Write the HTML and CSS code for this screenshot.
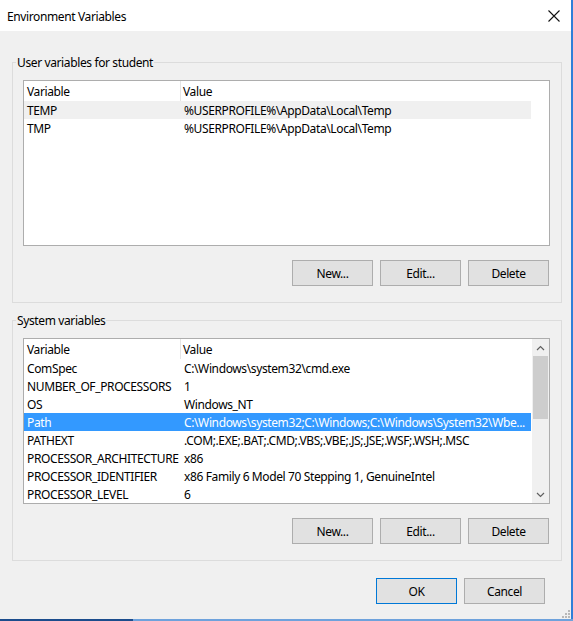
FILE: index.html
```html
<!DOCTYPE html>
<html>
<head>
<meta charset="utf-8">
<link rel="stylesheet" href="styles.css">
</head>
<body>
<div class="window">
  <div class="titlebar">
    <span class="title">Environment Variables</span>
    <svg class="close" width="12" height="12" viewBox="0 0 12 12"><path d="M0.5 0.5 L11.5 11.5 M11.5 0.5 L0.5 11.5" stroke="#111" stroke-width="1.1" fill="none"/></svg>
  </div>
  <div class="content">
    <fieldset class="group">
      <legend>User variables for student</legend>
      <div class="list">
        <div class="rows">
          <div class="row head"><span class="c1">Variable</span><span class="c2">Value</span></div>
          <div class="row soft"><span class="c1">TEMP</span><span class="c2">%USERPROFILE%\AppData\Local\Temp</span></div>
          <div class="row"><span class="c1">TMP</span><span class="c2">%USERPROFILE%\AppData\Local\Temp</span></div>
        </div>
      </div>
      <div class="btns">
        <button class="btn">New...</button>
        <button class="btn">Edit...</button>
        <button class="btn">Delete</button>
      </div>
    </fieldset>

    <fieldset class="group second">
      <legend>System variables</legend>
      <div class="list">
        <div class="rows">
          <div class="row head"><span class="c1">Variable</span><span class="c2">Value</span></div>
          <div class="row"><span class="c1">ComSpec</span><span class="c2">C:\Windows\system32\cmd.exe</span></div>
          <div class="row"><span class="c1">NUMBER_OF_PROCESSORS</span><span class="c2">1</span></div>
          <div class="row"><span class="c1">OS</span><span class="c2">Windows_NT</span></div>
          <div class="row selected"><span class="c1">Path</span><span class="c2">C:\Windows\system32;C:\Windows;C:\Windows\System32\Wbe...</span></div>
          <div class="row"><span class="c1">PATHEXT</span><span class="c2">.COM;.EXE;.BAT;.CMD;.VBS;.VBE;.JS;.JSE;.WSF;.WSH;.MSC</span></div>
          <div class="row"><span class="c1">PROCESSOR_ARCHITECTURE</span><span class="c2">x86</span></div>
          <div class="row"><span class="c1">PROCESSOR_IDENTIFIER</span><span class="c2">x86 Family 6 Model 70 Stepping 1, GenuineIntel</span></div>
          <div class="row"><span class="c1">PROCESSOR_LEVEL</span><span class="c2">6</span></div>
        </div>
        <div class="vscroll">
          <div class="arrow"><svg width="9" height="6" viewBox="0 0 9 6"><path d="M1 5 L4.5 1.5 L8 5" stroke="#606060" stroke-width="1.2" fill="none"/></svg></div>
          <div class="track"><div class="thumb"></div></div>
          <div class="arrow"><svg width="9" height="6" viewBox="0 0 9 6"><path d="M1 1 L4.5 4.5 L8 1" stroke="#606060" stroke-width="1.2" fill="none"/></svg></div>
        </div>
      </div>
      <div class="btns">
        <button class="btn">New...</button>
        <button class="btn">Edit...</button>
        <button class="btn">Delete</button>
      </div>
    </fieldset>

    <div class="dialog-btns">
      <button class="btn default">OK</button>
      <button class="btn">Cancel</button>
    </div>
    <svg class="grip" width="9" height="9" viewBox="0 0 9 9">
      <rect x="7" y="1" width="2" height="2" fill="#b8b8b8"/>
      <rect x="4" y="4" width="2" height="2" fill="#b8b8b8"/>
      <rect x="7" y="4" width="2" height="2" fill="#b8b8b8"/>
      <rect x="1" y="7" width="2" height="2" fill="#b8b8b8"/>
      <rect x="4" y="7" width="2" height="2" fill="#b8b8b8"/>
      <rect x="7" y="7" width="2" height="2" fill="#b8b8b8"/>
    </svg>
  </div>
  <div class="taskbar"></div>
</div>
</body>
</html>
```

FILE: styles.css
```css
* { box-sizing: border-box; }
html, body {
  margin: 0;
  padding: 0;
  width: 573px;
  height: 621px;
  overflow: hidden;
  background: #f0f0f0;
}
body {
  font-family: "Noto Sans", "Open Sans", sans-serif;
  font-size: 12px;
  letter-spacing: -0.38px;
  color: #000;
}
.window {
  width: 573px;
  height: 621px;
  border-right: 2px solid #2f7fd8;
  display: flex;
  flex-direction: column;
  position: relative;
}
.titlebar {
  height: 31px;
  background: #fff;
  display: flex;
  align-items: center;
  justify-content: space-between;
  padding: 0 11px 0 7px;
  flex: none;
}
.title {
  font-size: 12px;
  line-height: 16px;
  padding-top: 2px;
}
.close {
  display: block;
  margin-top: 1px;
}
.content {
  flex: 1;
  background: #f0f0f0;
  padding: 23px 9px 0 12px;
  position: relative;
}
.group {
  margin: 0;
  border: 1px solid #dcdcdc;
  padding: 10px 11px 16px 10px;
  min-width: 0;
}
.group.second {
  margin-top: 9px;
}
.group legend {
  padding: 1px 1px 0;
  margin-left: -7px;
  line-height: 15px;
  height: 16px;
}
.list {
  height: 166px;
  background: #fff;
  border: 1px solid #adadad;
  display: flex;
  overflow: hidden;
}
.rows {
  width: 507px;
  flex: none;
  overflow: hidden;
}
.row {
  display: flex;
  height: 18px;
  line-height: 17px;
  white-space: nowrap;
}
.row span {
  padding-top: 1px;
}
.row.head {
  height: 20px;
  line-height: 19px;
}
.row .c1 {
  width: 157px;
  flex: none;
  padding-left: 3px;
  overflow: hidden;
}
.row .c2 {
  flex: 1;
  padding-left: 3px;
  overflow: hidden;
}
.row.head .c1 {
  border-right: 1px solid #e5e5e5;
}
.row.head .c2 {
  padding-left: 2px;
}
.row.soft {
  background: #f0f0f0;
}
.row.selected {
  background: #3399ff;
  color: #fff;
}
.vscroll {
  margin-left: auto;
  width: 17px;
  background: #f0f0f0;
  display: flex;
  flex-direction: column;
  flex: none;
}
.arrow {
  height: 17px;
  display: flex;
  align-items: center;
  justify-content: center;
  flex: none;
}
.arrow svg { display: block; }
.track {
  flex: 1;
  padding: 0 1px;
}
.thumb {
  height: 63px;
  background: #cdcdcd;
}
.btns {
  display: flex;
  justify-content: flex-end;
  gap: 7px;
  margin-top: 14px;
  padding-right: 1px;
}
.btn {
  font-family: inherit;
  font-size: 12px;
  letter-spacing: -0.38px;
  color: #000;
  width: 81px;
  height: 26px;
  padding: 2px 0 0;
  margin: 0;
  background: #e1e1e1;
  border: 1px solid #adadad;
  border-radius: 0;
  line-height: 22px;
}
.btn.default {
  border-color: #0078d7;
}
.dialog-btns {
  display: flex;
  justify-content: flex-end;
  gap: 7px;
  margin-top: 17px;
  padding-right: 17px;
}
.grip {
  position: absolute;
  right: 1px;
  bottom: 1px;
}
.taskbar {
  height: 2px;
  flex: none;
  margin-right: -2px;
  background: linear-gradient(to right, #1b4c8c 0, #1b4c8c 133px, #6ea2dc 133px, #6ea2dc 100%);
}
```
